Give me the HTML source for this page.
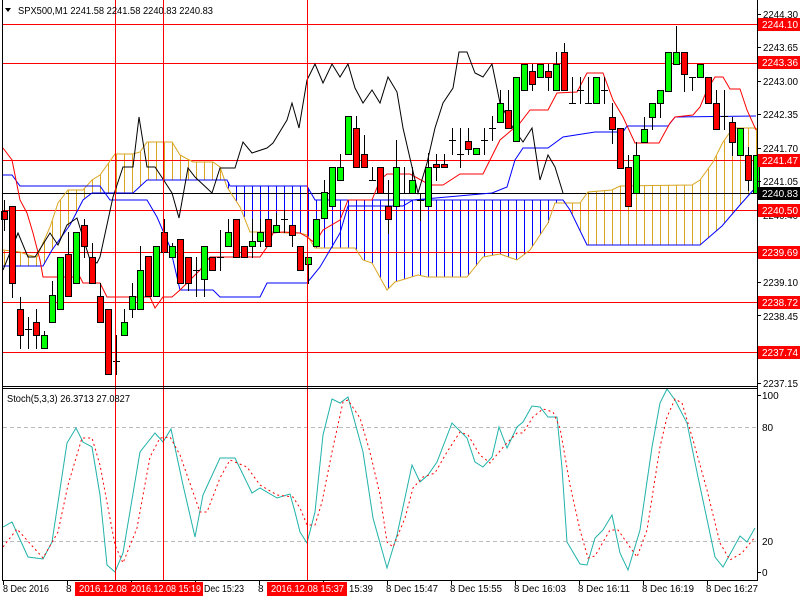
<!DOCTYPE html>
<html><head><meta charset="utf-8"><style>
html,body{margin:0;padding:0;background:#fff;width:800px;height:600px;overflow:hidden}
svg{display:block}
text{font-family:"Liberation Sans",sans-serif;font-size:10px}
</style></head><body>
<svg id="s" width="800" height="600" xmlns="http://www.w3.org/2000/svg">
<rect width="800" height="600" fill="#fff"/>
<g id="g"></g>
<line x1="2.5" y1="0" x2="2.5" y2="581" stroke="#000"/>
<line x1="757.5" y1="0" x2="757.5" y2="581" stroke="#000"/>
<line x1="2" y1="386.5" x2="758" y2="386.5" stroke="#000"/>
<line x1="2" y1="388.5" x2="758" y2="388.5" stroke="#000"/>
<line x1="2" y1="580.5" x2="758" y2="580.5" stroke="#000"/>
<polygon points="5,8 11,8 8,12" fill="#000"/>
<text x="18" y="14" fill="#000" textLength="195" lengthAdjust="spacingAndGlyphs">SPX500,M1  2241.58 2241.58 2240.83 2240.83</text>
<text x="7" y="402" fill="#000" textLength="123" lengthAdjust="spacingAndGlyphs">Stoch(5,3,3) 26.3713 27.0827</text>
<g fill="#000" id="plab"></g>
<g fill="#000">
<text x="762" y="399">100</text>
<text x="762" y="431">80</text>
<text x="762" y="545">20</text>
<text x="762" y="576">0</text>
</g>
<g stroke="#000">
<line x1="757" y1="14.5" x2="761" y2="14.5"/><line x1="757" y1="47.5" x2="761" y2="47.5"/>
<line x1="757" y1="81.5" x2="761" y2="81.5"/><line x1="757" y1="114.5" x2="761" y2="114.5"/>
<line x1="757" y1="148.5" x2="761" y2="148.5"/><line x1="757" y1="181.5" x2="761" y2="181.5"/>
<line x1="757" y1="282.5" x2="761" y2="282.5"/><line x1="757" y1="315.5" x2="761" y2="315.5"/>
<line x1="757" y1="383.5" x2="761" y2="383.5"/>
<line x1="757" y1="395.5" x2="761" y2="395.5"/><line x1="757" y1="572.5" x2="761" y2="572.5"/>
</g>
<g id="boxes"></g>
<g id="ticks" stroke="#000"></g>
<g fill="#000">
<text x="3" y="592" textLength="46" lengthAdjust="spacingAndGlyphs">8 Dec 2016</text>
<text x="66" y="592">8</text>
<rect x="75" y="582" width="53" height="14" fill="#f00"/>
<text x="79" y="592" fill="#fff" textLength="48" lengthAdjust="spacingAndGlyphs">2016.12.08</text>
<rect x="128" y="582" width="75" height="14" fill="#f00"/>
<text x="131" y="592" fill="#fff" textLength="70" lengthAdjust="spacingAndGlyphs">2016.12.08 15:19</text>
<text x="204" y="592" textLength="40" lengthAdjust="spacingAndGlyphs">Dec 15:23</text>
<text x="258" y="592">8</text>
<rect x="267" y="582" width="80" height="14" fill="#f00"/>
<text x="271" y="592" fill="#fff" textLength="73" lengthAdjust="spacingAndGlyphs">2016.12.08 15:37</text>
<text x="349" y="592" textLength="24" lengthAdjust="spacingAndGlyphs">15:39</text>
<text x="386" y="592" textLength="52" lengthAdjust="spacingAndGlyphs">8 Dec 15:47</text>
<text x="450" y="592" textLength="52" lengthAdjust="spacingAndGlyphs">8 Dec 15:55</text>
<text x="514" y="592" textLength="52" lengthAdjust="spacingAndGlyphs">8 Dec 16:03</text>
<text x="578" y="592" textLength="52" lengthAdjust="spacingAndGlyphs">8 Dec 16:11</text>
<text x="642" y="592" textLength="52" lengthAdjust="spacingAndGlyphs">8 Dec 16:19</text>
<text x="706" y="592" textLength="52" lengthAdjust="spacingAndGlyphs">8 Dec 16:27</text>
</g>
</svg>
<script>
var NS="http://www.w3.org/2000/svg",G=document.getElementById("g");
function el(t,a,p){var e=document.createElementNS(NS,t);for(var k in a)e.setAttribute(k,a[k]);(p||G).appendChild(e);return e;}
function pl(pts,c,extra){var a={points:pts.map(function(p){return p.join(",")}).join(" "),fill:"none",stroke:c,"stroke-width":1};for(var k in extra)a[k]=extra[k];el("polyline",a);}
function interp(L,x){if(x<=L[0][0])return L[0][1];for(var i=1;i<L.length;i++){if(x<=L[i][0]){var a=L[i-1],b=L[i];return a[1]+(b[1]-a[1])*(x-a[0])/(b[0]-a[0]||1);}}return L[L.length-1][1];}
var A=[[3,250],[20,252],[28,255],[37,257],[43,243],[50,227],[58,203],[68,190],[83,190],[92,180],[100,175],[115,154],[133,154],[140,152],[147,142],[172,142],[180,155],[193,162],[213,162],[220,167],[227,187],[240,207],[250,232],[273,232],[287,233],[300,233],[307,235],[315,248],[355,248],[363,260],[372,263],[387,290],[395,282],[418,275],[427,277],[467,277],[483,257],[500,254],[517,260],[530,250],[548,223],[555,203],[580,203],[588,192],[612,190],[620,186],[692,185],[700,180],[713,162],[723,142],[733,128],[756,128]];
var B=[[3,266],[43,266],[52,250],[70,225],[83,200],[92,193],[133,193],[147,180],[227,180],[230,186],[307,186],[315,200],[563,200],[570,210],[587,245],[700,245],[722,226],[740,205],[756,187]];
for(var x=4;x<757;x+=8){var ya=interp(A,x),yb=interp(B,x);if(Math.abs(ya-yb)<1)continue;el("line",{x1:x+.5,x2:x+.5,y1:ya,y2:yb,stroke:ya<yb?"#DAA520":"#0000FF"});}
[24,63,160,210,252,302,352].forEach(function(y){el("line",{x1:3,x2:757,y1:y+.5,y2:y+.5,stroke:"#f00"});});
el("line",{x1:3,x2:757,y1:193.5,y2:193.5,stroke:"#000"});
[427,541].forEach(function(y){el("line",{x1:3,x2:757,y1:y+.5,y2:y+.5,stroke:"#bbb","stroke-dasharray":"4,3"});});
pl(A,"#DAA520");pl(B,"#0000FF");
var K=[[3,175],[12,175],[20,186],[100,186],[110,200],[147,200],[157,217],[170,247],[180,290],[213,290],[220,297],[260,297],[267,283],[307,283],[320,267],[340,233],[348,206],[403,206],[413,200],[492,193],[507,187],[515,160],[523,148],[548,148],[563,137],[595,132],[623,132],[627,126],[668,126],[675,117],[756,116]];
pl(K,"#0000FF");
var T=[[3,148],[12,160],[20,200],[27,213],[33,233],[40,260],[43,277],[80,277],[83,283],[100,283],[107,297],[150,297],[155,308],[163,297],[172,297],[180,290],[200,270],[210,257],[260,257],[267,247],[273,233],[283,232],[300,233],[307,237],[315,243],[323,230],[340,220],[348,200],[372,200],[380,180],[387,174],[410,174],[430,185],[443,185],[460,174],[483,174],[500,140],[520,123],[530,110],[548,110],[557,93],[577,92],[587,73],[603,73],[613,100],[623,117],[635,143],[659,143],[670,123],[675,117],[693,115],[700,107],[707,90],[715,77],[723,77],[730,89],[740,89],[747,110],[756,130]];
pl(T,"#FF0000");
var C=[[3,270],[18,233],[28,257],[35,257],[50,233],[58,245],[67,225],[77,218],[90,260],[97,263],[100,257],[113,197],[123,167],[133,167],[139,117],[147,167],[155,167],[163,179],[172,193],[179,218],[188,168],[195,177],[212,193],[220,168],[235,168],[243,142],[252,153],[267,148],[273,143],[287,120],[292,103],[299,128],[307,80],[315,64],[323,83],[332,64],[340,77],[348,64],[355,88],[363,103],[372,90],[380,103],[388,77],[397,92],[403,128],[412,167],[418,193],[427,163],[435,128],[443,103],[453,88],[459,52],[467,52],[475,73],[483,77],[492,64],[500,103],[513,128],[523,142],[532,128],[540,180],[548,155],[555,167],[563,193]];
pl(C,"#000");
var D=[["r",211,219,200,230],["r",206,283,206,297],["r",309,335,297,348],["d",329,329,317,348],["r",322,335,309,348],["g",335,348,331,348],["g",295,322,281,322],["g",257,309,257,309],["r",254,296,232,296],["g",232,283,232,283],
["r",225,246,219,257],["r",257,283,243,283],["r",296,322,283,322],["r",309,374,309,374],["d",361,361,335,374],["g",322,335,309,335],["g",296,309,283,317],["g",270,309,246,309],["r",256,296,256,296],["g",246,296,246,296],
["r",232,252,219,252],["g",246,257,243,257],["r",239,283,239,283],["r",257,283,257,290],["d",270,270,257,296],["g",246,279,246,296],["r",257,270,257,270],["d",257,257,230,270],["g",232,246,219,246],["r",219,257,219,257],
["r",246,257,246,257],["g",241,246,219,257],["g",232,241,219,246],["r",219,246,219,246],["g",225,232,213,232],["d",219,219,210,232],["r",225,235,225,246],["r",246,270,246,270],["g",257,264,257,283],["g",219,246,219,246],
["g",192,218,180,218],["g",167,206,167,206],["g",167,180,154,180],["g",116,154,116,154],["r",128,167,116,167],["r",154,167,135,167],["d",180,180,167,180],["r",167,193,167,193],["r",206,219,180,233],["g",167,206,140,206],
["d",193,193,167,193],["g",180,193,167,193],["d",200,200,193,220],["g",167,206,153,206],["r",164,167,154,180],["r",164,167,154,167],["d",140,140,128,154],["d",154,154,128,167],["r",141,149,128,154],["g",148,154,148,154],
["d",140,140,128,154],["d",128,128,116,140],["g",103,122,90,122],["r",110,128,90,128],["g",77,141,77,141],["g",64,90,64,90],["r",71,84,64,90],["g",64,77,64,77],["r",71,77,64,90],["g",64,90,52,90],
["r",52,90,43,90],["d",103,103,77,103],["d",90,90,77,103],["d",103,103,77,103],["g",77,103,77,103],["d",90,90,77,103],["r",117,129,103,143],["r",128,168,128,168],["r",167,206,155,206],["g",155,193,142,193],
["g",129,142,117,142],["g",103,117,103,129],["g",90,103,90,117],["g",52,91,52,91],["g",52,64,26,64],["r",52,74,52,91],["d",77,77,77,90],["g",64,77,64,77],["r",77,103,77,103],["r",103,129,90,129],
["d",116,116,90,129],["r",122,142,117,155],["g",128,155,128,155],["r",155,180,147,190],["g",155,193,155,193]];
D.forEach(function(d,i){var x=4+8*i;
 el("line",{x1:x+.5,x2:x+.5,y1:d[3],y2:d[4]+1,stroke:"#000"});
 if(d[0]=="d"){el("line",{x1:x-3,x2:x+4,y1:d[1]+.5,y2:d[1]+.5,stroke:"#000"});}
 else{el("rect",{x:x-2.5,y:d[1]+.5,width:6,height:Math.max(d[2]-d[1],2),fill:d[0]=="r"?"#FF0000":"#00FF00",stroke:"#000"});}
});
var SM=[[3,527],[12,522],[28,557],[43,559],[52,542],[67,443],[76,428],[83,442],[92,447],[100,495],[107,565],[115,572],[123,553],[140,452],[155,433],[163,442],[171,429],[183,485],[195,537],[203,495],[220,458],[235,458],[252,493],[260,488],[277,498],[290,494],[295,512],[300,532],[307,543],[315,512],[323,435],[332,399],[340,403],[348,397],[363,452],[373,518],[387,568],[397,535],[412,465],[420,482],[428,475],[437,462],[452,423],[467,438],[475,462],[483,467],[492,457],[499,427],[507,448],[517,427],[523,422],[532,406],[540,407],[548,417],[557,417],[562,468],[567,542],[580,564],[587,565],[595,538],[603,530],[612,515],[620,553],[628,570],[640,530],[652,447],[660,403],[667,389],[675,400],[687,423],[698,477],[715,557],[723,567],[740,536],[747,542],[755,528]];
var SS=[[3,547],[17,529],[43,558],[58,532],[68,485],[82,438],[92,438],[100,465],[115,545],[123,563],[137,528],[150,457],[160,438],[170,437],[180,455],[200,512],[207,512],[220,478],[230,460],[247,467],[260,485],[277,495],[293,497],[300,508],[307,525],[315,525],[322,502],[332,452],[343,402],[348,400],[360,418],[370,452],[380,495],[387,542],[393,547],[405,518],[413,488],[423,477],[435,473],[447,452],[460,432],[468,435],[480,455],[490,463],[505,445],[517,433],[523,433],[533,417],[543,409],[553,412],[560,428],[570,485],[580,530],[588,558],[595,556],[610,530],[618,530],[637,557],[647,530],[660,447],[667,417],[675,399],[682,403],[693,440],[707,490],[720,543],[730,560],[742,553],[755,537]];
pl(SM,"#20B2AA");pl(SS,"#FF0000",{"stroke-dasharray":"2,3"});
[115,163,307].forEach(function(x){el("line",{x1:x+.5,x2:x+.5,y1:0,y2:580,stroke:"#f00"});});
var PL=document.getElementById("plab");
[[18,"2244.30"],[51,"2243.65"],[85,"2243.00"],[118,"2242.35"],[152,"2241.70"],[185,"2241.05"],[219,"2240.40"],[286,"2239.10"],[320,"2238.45"],[387,"2237.15"]].forEach(function(b){
 var t=el("text",{x:763,y:b[0],textLength:35,lengthAdjust:"spacingAndGlyphs"},PL);t.textContent=b[1];});
var BX=document.getElementById("boxes");
[[24,"2244.10","#f00"],[62,"2243.36","#f00"],[160,"2241.47","#f00"],[193,"2240.83","#000"],[210,"2240.50","#f00"],[252,"2239.69","#f00"],[302,"2238.72","#f00"],[352,"2237.74","#f00"]].forEach(function(b){
 el("rect",{x:758,y:b[0]-6,width:42,height:13,fill:b[2]},BX);
 var t=el("text",{x:762,y:b[0]+4,fill:"#fff",textLength:36,lengthAdjust:"spacingAndGlyphs"},BX);t.textContent=b[1];});
var TK=document.getElementById("ticks");
for(var x=3;x<757;x+=64){el("line",{x1:x+.5,x2:x+.5,y1:580,y2:585},TK);}
</script>
</body></html>
